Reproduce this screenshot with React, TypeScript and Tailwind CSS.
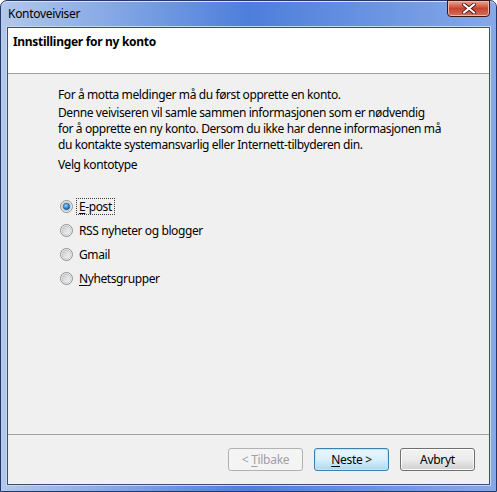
import React from "react"

const font = { fontFamily: '"Noto Sans", "Open Sans", sans-serif' }

const options = [
  { key: "epost", label: "E-post", mnemonic: 0, checked: true },
  { key: "rss", label: "RSS nyheter og blogger", mnemonic: -1, checked: false },
  { key: "gmail", label: "Gmail", mnemonic: -1, checked: false },
  { key: "news", label: "Nyhetsgrupper", mnemonic: 0, checked: false },
]

function Mnemonic({ text, index }: { text: string; index: number }) {
  if (index < 0) return <span className="whitespace-pre">{text}</span>
  return (
    <span className="whitespace-pre">
      {text.slice(0, index)}
      <span className="underline underline-offset-2">{text[index]}</span>
      {text.slice(index + 1)}
    </span>
  )
}

function Radio({ checked }: { checked: boolean }) {
  return (
    <svg width="13" height="13" viewBox="0 0 13 13" className="shrink-0">
      <defs>
        <linearGradient id="rbg" x1="0" y1="0" x2="1" y2="1">
          <stop offset="0" stopColor="#c9c9c9" />
          <stop offset="1" stopColor="#f7f7f7" />
        </linearGradient>
        <radialGradient id="rdot" cx="0.4" cy="0.35" r="0.7">
          <stop offset="0" stopColor="#9fd8ff" />
          <stop offset="0.6" stopColor="#2a8ad4" />
          <stop offset="1" stopColor="#0c4f8c" />
        </radialGradient>
      </defs>
      <circle cx="6.5" cy="6.5" r="6" fill="#f4f4f4" stroke="#8e8f8f" strokeWidth="1" />
      <circle cx="6.5" cy="6.5" r="4.5" fill="url(#rbg)" stroke="#c2c2c2" strokeWidth="0.8" />
      {checked && <circle cx="6.5" cy="6.5" r="3.2" fill="url(#rdot)" stroke="#1a4f82" strokeWidth="0.6" />}
    </svg>
  )
}

function Button({
  label,
  mnemonic,
  disabled,
  isDefault,
}: {
  label: string
  mnemonic: number
  disabled?: boolean
  isDefault?: boolean
}) {
  const base = "w-[75px] h-[23px] rounded-[3px] border text-[12px] tracking-[-0.3px] flex items-center justify-center"
  if (disabled)
    return (
      <div className={`${base} border-[#adb2b5] bg-[#f4f4f4] text-[#a0a0a0]`}>
        <Mnemonic text={label} index={mnemonic} />
      </div>
    )
  if (isDefault)
    return (
      <div className={`${base} border-[#3c7fb1] bg-gradient-to-b from-[#eaf6fd] via-[#d9f0fc] to-[#a7d9f5] text-black shadow-[inset_0_0_0_1px_#bfe7fb]`}>
        <Mnemonic text={label} index={mnemonic} />
      </div>
    )
  return (
    <div className={`${base} border-[#707070] bg-gradient-to-b from-[#f2f2f2] via-[#ebebeb] to-[#cfcfcf] text-black shadow-[inset_0_0_0_1px_#fcfcfc]`}>
      <Mnemonic text={label} index={mnemonic} />
    </div>
  )
}

export default function App() {
  return (
    <div style={font} className="w-[497px] h-[492px] overflow-hidden">
      <div className="w-full h-full flex flex-col rounded-t-[7px] border border-[#22386a] bg-gradient-to-r from-[#b3c8ea] via-[#4d7edb] to-[#86a8e8] shadow-[inset_0_1px_0_#d6e2f5]">
        {/* Title bar */}
        <div className="h-[26px] shrink-0 flex items-start justify-between pl-[7px] pr-[6px]">
          <span className="mt-[5px] text-[12px] leading-[16px] tracking-[-0.3px] text-black">Kontoveiviser</span>
          <div className="w-[43px] h-[17px] -mt-px rounded-b-[4px] border border-[#3b1515] bg-gradient-to-b from-[#e8a493] via-[#c7432e] to-[#d0705e] shadow-[inset_0_0_0_1px_#f0b7a9] flex items-center justify-center">
            <svg width="14" height="11" viewBox="0 0 14 11">
              <path d="M2 1.5 L12 9.5 M12 1.5 L2 9.5" stroke="#3a1010" strokeWidth="3.6" strokeLinecap="square" />
              <path d="M2 1.5 L12 9.5 M12 1.5 L2 9.5" stroke="#ffffff" strokeWidth="2" strokeLinecap="square" />
            </svg>
          </div>
        </div>

        {/* Client area */}
        <div className="flex-1 mx-[6px] mb-[6px] border border-[#3a4e72] bg-[#f0f0f0] flex flex-col shadow-[0_0_0_1px_#c8d8f2]">
          <div className="h-[46px] shrink-0 bg-white border-b border-[#a0a0a0] px-[5px] pt-[6px] text-[12px] leading-[16px] tracking-[-0.3px] font-bold text-black">
            Innstillinger for ny konto
          </div>

          <div className="flex-1 pl-[50px] pt-[13px] text-[12px] leading-[16px] tracking-[-0.4px] text-black whitespace-nowrap">
            <p>For å motta meldinger må du først opprette en konto.</p>
            <p className="mt-[2px]">
              Denne veiviseren vil samle sammen informasjonen som er nødvendig
              <br />
              for å opprette en ny konto. Dersom du ikke har denne informasjonen må
              <br />
              du kontakte systemansvarlig eller Internett-tilbyderen din.
            </p>
            <p className="mt-[4px]">Velg kontotype</p>

            <div className="mt-[21px] flex flex-col">
              {options.map((o) => (
                <div key={o.key} className="h-[24px] flex items-center pl-[2px]">
                  <Radio checked={o.checked} />
                  <span
                    className={`ml-[3px] px-[2px] leading-[15px] border border-dotted ${
                      o.checked ? "border-[#404040]" : "border-transparent"
                    }`}
                  >
                    <Mnemonic text={o.label} index={o.mnemonic} />
                  </span>
                </div>
              ))}
            </div>
          </div>

          <div className="h-[50px] shrink-0 border-t border-[#a0a0a0] flex justify-end items-start gap-[11px] pt-[13px] pr-[14px]">
            <Button label="< Tilbake" mnemonic={2} disabled />
            <Button label="Neste >" mnemonic={0} isDefault />
            <Button label="Avbryt" mnemonic={-1} />
          </div>
        </div>
      </div>
    </div>
  )
}
